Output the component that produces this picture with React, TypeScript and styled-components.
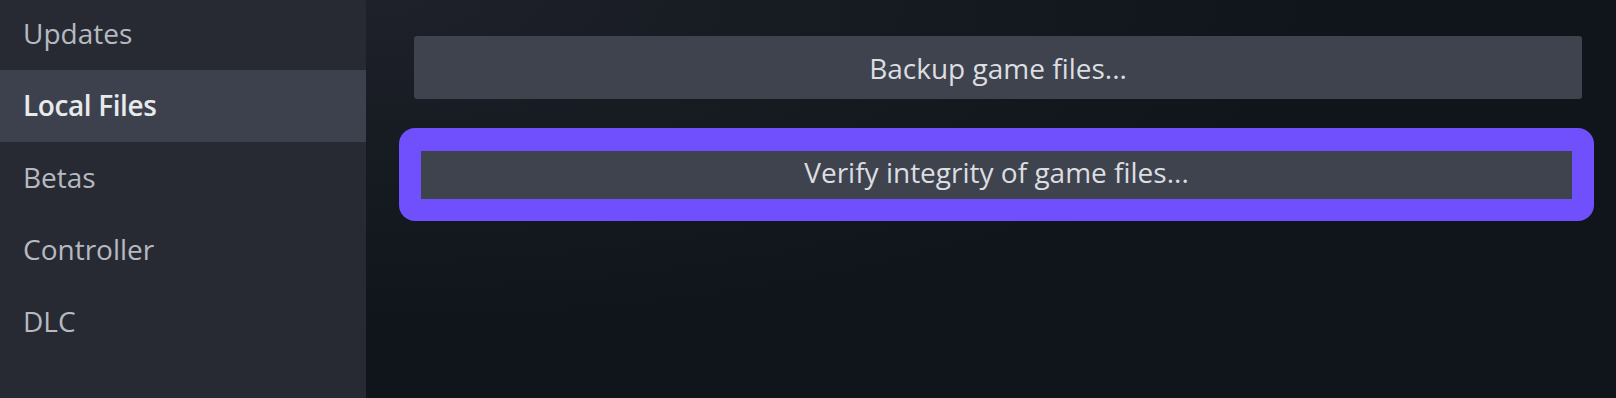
import React from "react";
import styled, { createGlobalStyle } from "styled-components";

const GlobalStyle = createGlobalStyle`
  html, body {
    margin: 0;
    padding: 0;
    background: #10141b;
    overflow: hidden;
  }
  * { box-sizing: border-box; }
`;

const Page = styled.div`
  display: flex;
  width: 1616px;
  height: 398px;
  overflow: hidden;
  font-family: "Open Sans", "Noto Sans", sans-serif;
`;

const Sidebar = styled.nav`
  width: 366px;
  flex: 0 0 366px;
  background: #272a33;
  display: flex;
  flex-direction: column;
  overflow: hidden;
`;

const NavList = styled.div`
  display: flex;
  flex-direction: column;
  margin-top: -2px;
`;

const NavItem = styled.div<{ $active?: boolean }>`
  height: 72px;
  display: flex;
  align-items: center;
  padding: 0 0 3px 23px;
  font-size: 28px;
  line-height: 1;
  color: ${(p) => (p.$active ? "#e8eaec" : "#b6bac0")};
  background: ${(p) => (p.$active ? "#3d414e" : "transparent")};
  font-weight: ${(p) => (p.$active ? 600 : 400)};
  letter-spacing: ${(p) => (p.$active ? "-0.4px" : "0")};
`;

const Main = styled.main`
  flex: 1;
  background: radial-gradient(ellipse 1000px 340px at 0 0, #1e2129 0%, #151920 55%, #10141b 100%);
  padding: 36px 34px 0 48px;
  display: flex;
  flex-direction: column;
`;

const ActionButton = styled.button<{ $h: number; $square?: boolean; $lift?: number }>`
  height: ${(p) => p.$h}px;
  width: 100%;
  border: none;
  border-radius: ${(p) => (p.$square ? "0" : "3px")};
  background: #3f434e;
  color: #dcdee1;
  font-family: inherit;
  font-size: 28px;
  line-height: 1;
  display: flex;
  align-items: center;
  justify-content: center;
  padding: 0 0 ${(p) => p.$lift ?? 0}px 0;
  cursor: pointer;
`;

const FocusRing = styled.div`
  margin: 29px -12px 0 -15px;
  padding: 23px 22px 22px 22px;
  background: #704ffd;
  border-radius: 16px;
  display: flex;
`;

export default function App() {
  const items = ["Updates", "Local Files", "Betas", "Controller", "DLC"];
  return (
    <>
      <GlobalStyle />
      <Page>
        <Sidebar>
          <NavList>
            {items.map((it) => (
              <NavItem key={it} $active={it === "Local Files"}>
                {it}
              </NavItem>
            ))}
          </NavList>
        </Sidebar>
        <Main>
          <ActionButton $h={63}>Backup game files...</ActionButton>
          <FocusRing>
            <ActionButton $h={48} $square $lift={6}>
              Verify integrity of game files...
            </ActionButton>
          </FocusRing>
        </Main>
      </Page>
    </>
  );
}
